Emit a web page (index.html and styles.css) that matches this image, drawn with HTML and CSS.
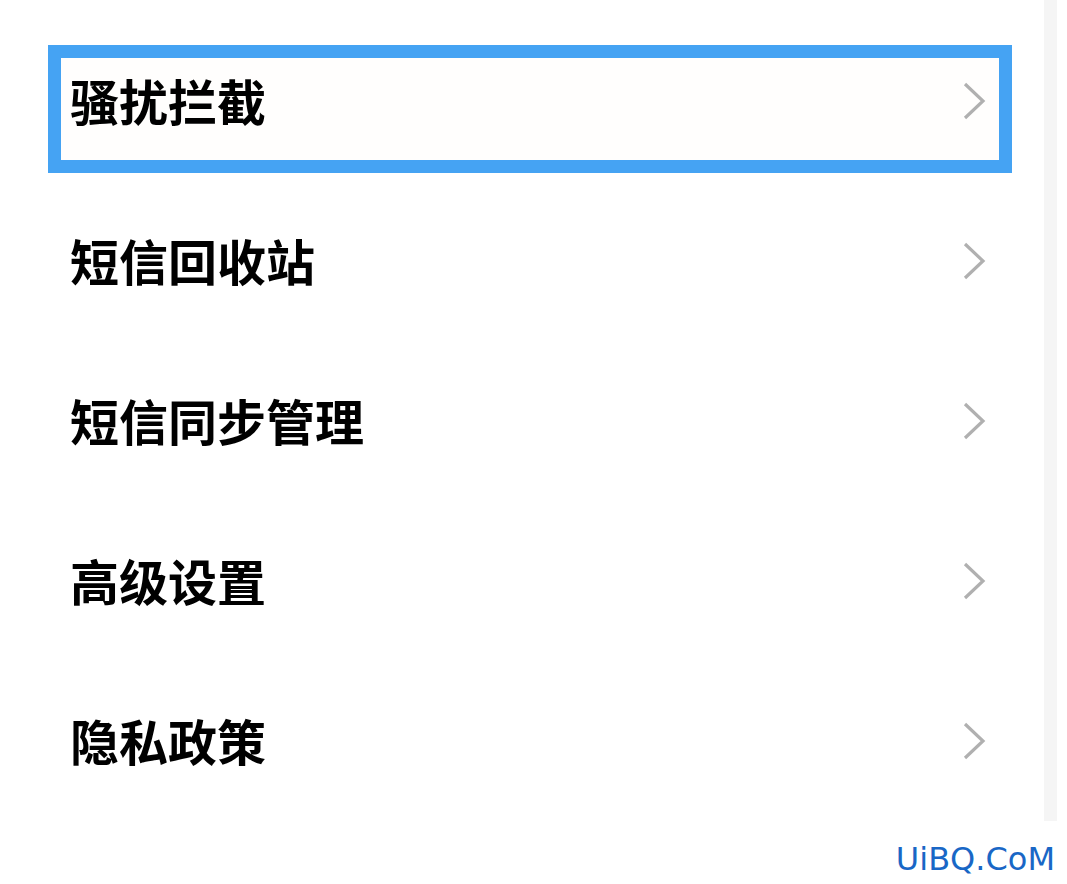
FILE: index.html
```html
<!DOCTYPE html>
<html lang="zh-CN">
<head>
<meta charset="utf-8">
<title>设置</title>
<link rel="stylesheet" href="styles.css">
</head>
<body>
<div class="page">
  <div class="main">
    <ul class="list">
      <li class="row row-selected">
        <span class="label">骚扰拦截</span>
        <svg class="chev" viewBox="0 0 23 38" width="23" height="38"><polyline points="2,2 20,19 2,36"/></svg>
        <span class="highlight"></span>
      </li>
      <li class="row">
        <span class="label">短信回收站</span>
        <svg class="chev" viewBox="0 0 23 38" width="23" height="38"><polyline points="2,2 20,19 2,36"/></svg>
      </li>
      <li class="row">
        <span class="label">短信同步管理</span>
        <svg class="chev" viewBox="0 0 23 38" width="23" height="38"><polyline points="2,2 20,19 2,36"/></svg>
      </li>
      <li class="row">
        <span class="label">高级设置</span>
        <svg class="chev" viewBox="0 0 23 38" width="23" height="38"><polyline points="2,2 20,19 2,36"/></svg>
      </li>
      <li class="row">
        <span class="label">隐私政策</span>
        <svg class="chev" viewBox="0 0 23 38" width="23" height="38"><polyline points="2,2 20,19 2,36"/></svg>
      </li>
    </ul>
    <div class="strip"></div>
  </div>
  <div class="footer">UiBQ.CoM</div>
</div>
</body>
</html>
```
FILE: styles.css
```css
html, body {
  margin: 0;
  padding: 0;
  background: #ffffff;
}

body {
  font-family: "Noto Sans CJK SC", "Noto Sans", sans-serif;
  color: #000000;
}

.page {
  width: 1067px;
  height: 884px;
  display: flex;
  flex-direction: column;
}

.main {
  display: grid;
  grid-template-columns: 1044px 13px 1fr;
  height: 815px;
}

.list {
  list-style: none;
  margin: 0;
  padding: 21px 0 0 0;
}

.row {
  position: relative;
  height: 160px;
  display: flex;
  align-items: center;
  justify-content: space-between;
  padding: 0 58px 0 70px;
}

.label {
  font-size: 49px;
  line-height: 1;
  font-weight: 700;
  margin-bottom: 4px;
  position: relative;
  z-index: 1;
}

.chev {
  display: block;
  fill: none;
  stroke: #b0b0b0;
  stroke-width: 3.2;
  position: relative;
  z-index: 1;
}

.highlight {
  position: absolute;
  top: 24px;
  left: 48px;
  width: 964px;
  height: 128px;
  box-sizing: border-box;
  border: 13px solid #45a3f3;
  background: #fffefd;
}

.strip {
  background: #f5f5f5;
}

.footer {
  font-family: "DejaVu Sans", sans-serif;
  font-size: 32px;
  line-height: 37px;
  color: #1967c6;
  text-align: right;
  padding: 26px 12px 0 0;
}
```
